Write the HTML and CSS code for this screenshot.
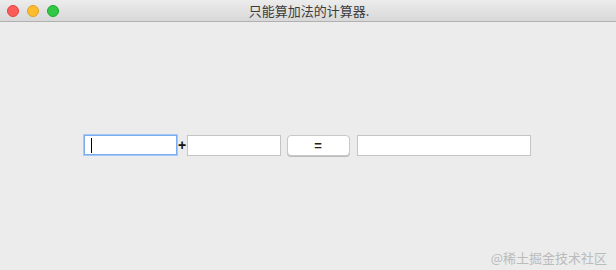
FILE: index.html
```html
<!DOCTYPE html>
<html lang="zh-CN">
<head>
    <meta charset="UTF-8">
    <title>只能算加法的计算器.</title>
    <link rel="stylesheet" href="styles.css">
</head>
<body>
    <div class="window">
        <div class="titlebar">
            <div class="lights">
                <span class="light red"></span>
                <span class="light yellow"></span>
                <span class="light green"></span>
            </div>
            <div class="title">只能算加法的计算器.</div>
        </div>
        <div class="content">
            <div class="calc-row">
                <span class="field-wrap">
                    <input type="text" class="field field-a focused" id="a">
                    <span class="caret"></span>
                </span>
                <span class="plus">+</span>
                <input type="text" class="field field-b" id="b">
                <button class="equals" onclick="calc()">=</button>
                <input type="text" class="field field-result" id="result">
            </div>
        </div>
        <div class="watermark">@稀土掘金技术社区</div>
    </div>
    <script>
        function calc() {
            let a = parseFloat(document.getElementById("a").value) || 0;
            let b = parseFloat(document.getElementById("b").value) || 0;
            document.getElementById("result").value = a + b;
        }
    </script>
</body>
</html>
```

FILE: styles.css
```css
body {
    margin: 0;
    font-family: "Liberation Sans", "Noto Sans CJK SC", sans-serif;
    background: #ececec;
}
.window {
    position: relative;
    width: 616px;
    height: 270px;
    background: #ececec;
    overflow: hidden;
}
.titlebar {
    position: relative;
    height: 21px;
    background: linear-gradient(#ececec, #d8d8d8);
    border-bottom: 1px solid #b1b1b1;
    display: flex;
    align-items: center;
    justify-content: center;
}
.lights {
    position: absolute;
    left: 7px;
    top: 5px;
    display: flex;
    gap: 8px;
}
.light {
    width: 12px;
    height: 12px;
    border-radius: 50%;
    box-sizing: border-box;
}
.red {
    background: #fc5b57;
    border: 1px solid #e0443e;
}
.yellow {
    background: #fdbc2e;
    border: 1px solid #dea123;
}
.green {
    background: #33c748;
    border: 1px solid #1aab29;
}
.title {
    font-size: 13px;
    color: #3c3c3c;
    font-family: "Noto Sans CJK SC", sans-serif;
    line-height: 21px;
    padding-left: 2px;
}
.content {
    display: flex;
    justify-content: center;
    padding-top: 112px;
    padding-right: 3px;
}
.calc-row {
    display: flex;
    align-items: center;
    height: 22px;
}
.field-wrap {
    position: relative;
    display: flex;
}
.caret {
    position: absolute;
    left: 8px;
    top: 3px;
    width: 1px;
    height: 15px;
    background: #000;
}
.field {
    box-sizing: border-box;
    height: 21px;
    border: 1px solid #c4c4c4;
    background: #fff;
    padding: 0 6px;
    font-size: 13px;
    outline: none;
    margin: 0;
}
.focused {
    border: 1px solid #7aacf0;
    box-shadow: 0 0 0 1px #a5c8f5;
    width: 93px;
    height: 20px;
    margin: 0 1px;
}
.field-b {
    width: 94px;
}
.field-result {
    width: 174px;
    margin-left: 7px;
}
.plus {
    font-size: 14px;
    font-weight: bold;
    color: #111;
    width: 9px;
    text-align: center;
}
.equals {
    width: 63px;
    height: 21px;
    margin-left: 6px;
    border: 1px solid #c8c8c8;
    border-radius: 4px;
    background: #fff;
    box-shadow: 0 1px 0 #bcbcbc;
    font-size: 13px;
    font-weight: bold;
    color: #222;
    padding: 0;
}
.watermark {
    position: absolute;
    right: 9px;
    bottom: 3px;
    font-size: 13px;
    color: #bbbbbb;
    font-family: "Noto Sans CJK SC", sans-serif;
}
```
